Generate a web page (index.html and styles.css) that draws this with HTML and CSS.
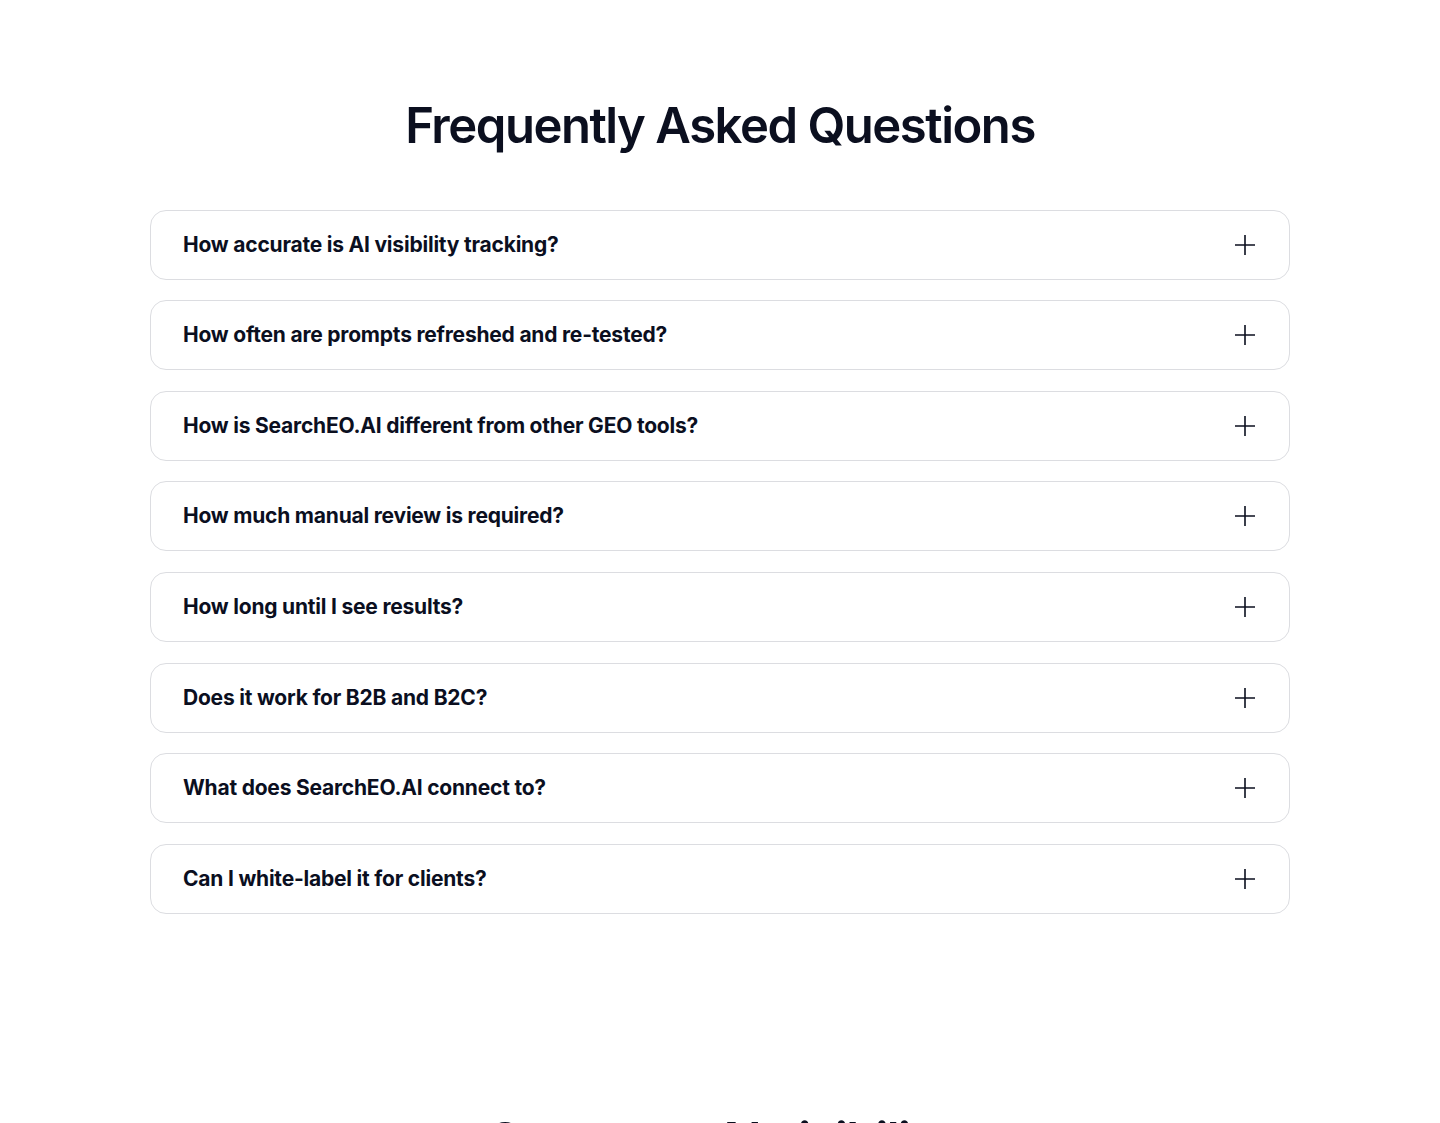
FILE: index.html
```html
<!DOCTYPE html>
<html lang="en">
<head>
    <meta charset="UTF-8">
    <meta name="viewport" content="width=device-width, initial-scale=1.0">
    <title>FAQ - SearchEO.AI</title>
    <link rel="stylesheet" href="styles.css">
</head>
<body>
    <section class="faq">
        <h2 class="section-title">Frequently Asked Questions</h2>

        <div class="faq-list">
            <div class="faq-item">
                <span class="faq-question">How accurate is AI visibility tracking?</span>
                <svg class="faq-toggle" viewBox="0 0 24 24"><path d="M12 2v20M2 12h20"/></svg>
            </div>
            <div class="faq-item">
                <span class="faq-question">How often are prompts refreshed and re-tested?</span>
                <svg class="faq-toggle" viewBox="0 0 24 24"><path d="M12 2v20M2 12h20"/></svg>
            </div>
            <div class="faq-item">
                <span class="faq-question">How is SearchEO.AI different from other GEO tools?</span>
                <svg class="faq-toggle" viewBox="0 0 24 24"><path d="M12 2v20M2 12h20"/></svg>
            </div>
            <div class="faq-item">
                <span class="faq-question">How much manual review is required?</span>
                <svg class="faq-toggle" viewBox="0 0 24 24"><path d="M12 2v20M2 12h20"/></svg>
            </div>
            <div class="faq-item">
                <span class="faq-question">How long until I see results?</span>
                <svg class="faq-toggle" viewBox="0 0 24 24"><path d="M12 2v20M2 12h20"/></svg>
            </div>
            <div class="faq-item">
                <span class="faq-question">Does it work for B2B and B2C?</span>
                <svg class="faq-toggle" viewBox="0 0 24 24"><path d="M12 2v20M2 12h20"/></svg>
            </div>
            <div class="faq-item">
                <span class="faq-question">What does SearchEO.AI connect to?</span>
                <svg class="faq-toggle" viewBox="0 0 24 24"><path d="M12 2v20M2 12h20"/></svg>
            </div>
            <div class="faq-item">
                <span class="faq-question">Can I white-label it for clients?</span>
                <svg class="faq-toggle" viewBox="0 0 24 24"><path d="M12 2v20M2 12h20"/></svg>
            </div>
        </div>
    </section>

    <section class="cta">
        <h2 class="section-title">Own your AI visibility</h2>
    </section>
</body>
</html>
```

FILE: styles.css
```css
body {
    margin: 0;
    font-family: Inter, "Noto Sans", sans-serif;
    color: #0b0f1f;
    background-color: #fff;
}
.section-title {
    margin: 0;
    text-align: center;
    font-size: 49px;
    font-weight: 600;
    line-height: 1.2;
    letter-spacing: -0.03em;
}
.faq {
    max-width: 1140px;
    margin: 0 auto;
    padding: 97px 0 0;
}
.faq-list {
    display: flex;
    flex-direction: column;
    gap: 20.57px;
    margin-top: 54px;
}
.faq-item {
    display: flex;
    align-items: center;
    justify-content: space-between;
    padding: 20px 32px 20px 32px;
    border: 1px solid #dcdde1;
    border-radius: 16px;
    cursor: pointer;
}
.faq-question {
    font-size: 21px;
    font-weight: 700;
    line-height: 28px;
    letter-spacing: -0.01em;
}
.faq-toggle {
    width: 24px;
    height: 24px;
    fill: none;
    stroke: #0b0f1f;
    stroke-width: 1.6;
}
.cta {
    padding-top: 198px;
}
```
